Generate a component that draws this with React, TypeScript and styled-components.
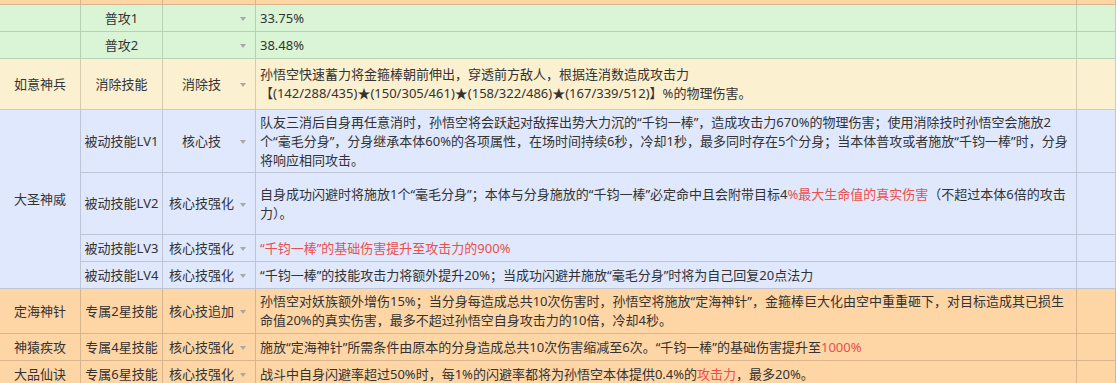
import React from 'react';
import styled, { createGlobalStyle } from 'styled-components';

type Tone = 'orange' | 'green' | 'yellow' | 'blue';

const tones: Record<Tone, string> = {
  orange: '#fed5a5',
  green: '#d9f5d6',
  yellow: '#fbf0cf',
  blue: '#dfe8fc',
};

const Global = createGlobalStyle`
  html, body { margin: 0; padding: 0; background: #ffffff; }
  body {
    font-family: "Noto Sans", "Noto Sans CJK SC", sans-serif;
    font-size: 13px;
    color: #333333;
  }
`;

const Table = styled.div`
  display: grid;
  grid-template-columns: 81px 82px 93px 821px 1fr;
  grid-template-rows: 5px 27px 27px 51px 63px 62px 27px 27px 45px 27px 27px;
  width: 1116px;
  overflow: hidden;
`;

const Cell = styled.div<{ $tone: Tone; $span?: number }>`
  box-sizing: border-box;
  background: ${(p) => tones[p.$tone]};
  border-right: 1px solid rgba(0, 0, 0, 0.15);
  border-bottom: 1px solid rgba(0, 0, 0, 0.15);
  display: flex;
  align-items: center;
  justify-content: center;
  text-align: center;
  line-height: 19px;
  white-space: nowrap;
  overflow: hidden;
  ${(p) => (p.$span ? `grid-row: span ${p.$span};` : '')}
`;

const TypeCell = styled(Cell)`
  padding-right: 9px;
`;

const TypeLabel = styled.span`
  flex: 1;
  text-align: center;
`;

const Caret = styled.span`
  width: 0;
  height: 0;
  border-left: 3.5px solid transparent;
  border-right: 3.5px solid transparent;
  border-top: 4px solid #a8a8a8;
  margin-top: 2px;
`;

const DescCell = styled(Cell)`
  justify-content: flex-start;
  text-align: left;
  white-space: normal;
  padding: 0 6px 0 4px;
`;

const Text = styled.div`
  line-height: 19px;
`;

const Red = styled.span`
  color: #e8504e;
`;

type RowProps = {
  tone: Tone;
  name?: string;
  nameSpan?: number;
  skipName?: boolean;
  level: string;
  kind: string;
  children?: React.ReactNode;
};

function Row({ tone, name, nameSpan, skipName, level, kind, children }: RowProps) {
  return (
    <>
      {!skipName && (
        <Cell $tone={tone} $span={nameSpan}>
          {name}
        </Cell>
      )}
      <Cell $tone={tone}>{level}</Cell>
      <TypeCell $tone={tone}>
        <TypeLabel>{kind}</TypeLabel>
        <Caret />
      </TypeCell>
      <DescCell $tone={tone}>
        <Text>{children}</Text>
      </DescCell>
      <Cell $tone={tone} />
    </>
  );
}

export default function App() {
  return (
    <>
      <Global />
      <Table>
        <Cell $tone="orange" />
        <Cell $tone="orange" />
        <Cell $tone="orange" />
        <Cell $tone="orange" />
        <Cell $tone="orange" />

        <Row tone="green" level="普攻1" kind="">
          33.75%
        </Row>
        <Row tone="green" level="普攻2" kind="">
          38.48%
        </Row>

        <Row tone="yellow" name="如意神兵" level="消除技能" kind="消除技">
          孙悟空快速蓄力将金箍棒朝前伸出，穿透前方敌人，根据连消数造成攻击力
          <br />
          【(142/288/435)★(150/305/461)★(158/322/486)★(167/339/512)】%的物理伤害。
        </Row>

        <Row tone="blue" name="大圣神威" nameSpan={4} level="被动技能LV1" kind="核心技">
          队友三消后自身再任意消时，孙悟空将会跃起对敌挥出势大力沉的“千钧一棒”，造成攻击力670%的物理伤害；使用消除技时孙悟空会施放2
          <br />
          个“毫毛分身”，分身继承本体60%的各项属性，在场时间持续6秒，冷却1秒，最多同时存在5个分身；当本体普攻或者施放“千钧一棒”时，分身
          <br />
          将响应相同攻击。
        </Row>
        <Row tone="blue" skipName level="被动技能LV2" kind="核心技强化">
          自身成功闪避时将施放1个“毫毛分身”；本体与分身施放的“千钧一棒”必定命中且会附带目标4
          <Red>%最大生命值的真实伤害</Red>（不超过本体6倍的攻击
          <br />
          力）。
        </Row>
        <Row tone="blue" skipName level="被动技能LV3" kind="核心技强化">
          <Red>“千钧一棒”的基础伤害提升至攻击力的900%</Red>
        </Row>
        <Row tone="blue" skipName level="被动技能LV4" kind="核心技强化">
          “千钧一棒”的技能攻击力将额外提升20%；当成功闪避并施放“毫毛分身”时将为自己回复20点法力
        </Row>

        <Row tone="orange" name="定海神针" level="专属2星技能" kind="核心技追加">
          孙悟空对妖族额外增伤15%；当分身每造成总共10次伤害时，孙悟空将施放“定海神针”，金箍棒巨大化由空中重重砸下，对目标造成其已损生
          <br />
          命值20%的真实伤害，最多不超过孙悟空自身攻击力的10倍，冷却4秒。
        </Row>
        <Row tone="orange" name="神猿疾攻" level="专属4星技能" kind="核心技强化">
          施放“定海神针”所需条件由原本的分身造成总共10次伤害缩减至6次。“千钧一棒”的基础伤害提升至<Red>1000%</Red>
        </Row>
        <Row tone="orange" name="大品仙诀" level="专属6星技能" kind="核心技强化">
          战斗中自身闪避率超过50%时，每1%的闪避率都将为孙悟空本体提供0.4%的<Red>攻击力</Red>，最多20%。
        </Row>
      </Table>
    </>
  );
}
